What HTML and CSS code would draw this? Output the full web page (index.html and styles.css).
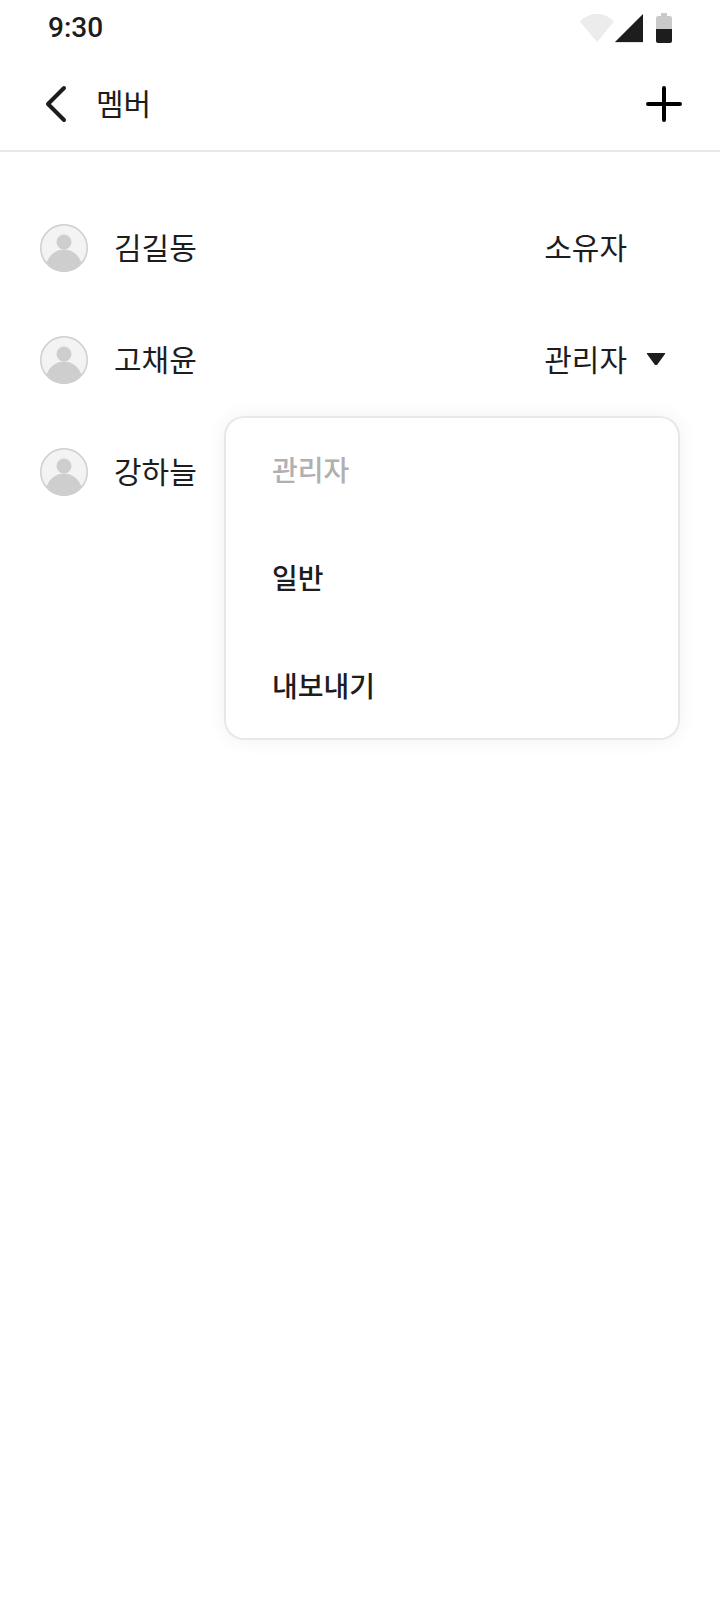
FILE: index.html
```html
<!DOCTYPE html>
<html lang="ko">
<head>
    <meta charset="UTF-8">
    <meta name="viewport" content="width=device-width, initial-scale=1.0">
    <title>멤버</title>
    <link rel="stylesheet" href="styles.css">
</head>
<body>
    <div class="status-bar">
        <span class="time">9:30</span>
        <div class="status-icons">
            <svg class="network" width="64" height="30" viewBox="0 0 64 30" aria-hidden="true">
                <path d="M0 8.6C4.5 3.6 10.5 1 17 1s12.500 2.600 17 7.600L17 29z" fill="#ececec"/>
                <path d="M35 29h28v1H35z" fill="#e0e0e0"/>
                <path d="M35 29L63 1v28H35z" fill="#1d1d1d"/>
            </svg>
            <svg class="battery" width="16" height="30" viewBox="0 0 16 30" aria-hidden="true">
                <path d="M5 0h6v3h3a2 2 0 0 1 2 2v11H0V5a2 2 0 0 1 2-2h3z" fill="#c9c9c9"/>
                <path d="M0 16h16v12a2 2 0 0 1-2 2H2a2 2 0 0 1-2-2z" fill="#1d1d1d"/>
            </svg>
        </div>
    </div>

    <header class="header">
        <button type="button" class="icon-button" aria-label="뒤로">
            <svg width="48" height="48" viewBox="0 0 48 48" fill="none" stroke="#1d1d1d" stroke-width="4" stroke-linecap="round" stroke-linejoin="round">
                <path d="M32 8L16 24l16 16"/>
            </svg>
        </button>
        <h1 class="title">멤버</h1>
        <button type="button" class="icon-button" aria-label="멤버 추가">
            <svg width="48" height="48" viewBox="0 0 48 48" fill="none" stroke="#000" stroke-width="4" stroke-linecap="round">
                <path d="M24 8v32M8 24h32"/>
            </svg>
        </button>
    </header>

    <main>
        <ul class="members">
            <li class="member">
                <svg class="avatar" viewBox="0 0 48 48" aria-hidden="true">
                    <circle cx="24" cy="24" r="23.250" fill="#f3f3f3" stroke="#cecece" stroke-width="1.500"/>
                    <circle cx="24" cy="18" r="7.500" fill="#cecece"/>
                    <path d="M6.500 39C9 31 16 25.500 24 25.500S39 31 41.500 39C37.500 44.500 31 48 24 48S10.500 44.500 6.500 39z" fill="#cecece"/>
                </svg>
                <span class="name">김길동</span>
                <span class="role owner">소유자</span>
            </li>
            <li class="member">
                <svg class="avatar" viewBox="0 0 48 48" aria-hidden="true">
                    <circle cx="24" cy="24" r="23.250" fill="#f3f3f3" stroke="#cecece" stroke-width="1.500"/>
                    <circle cx="24" cy="18" r="7.500" fill="#cecece"/>
                    <path d="M6.500 39C9 31 16 25.500 24 25.500S39 31 41.500 39C37.500 44.500 31 48 24 48S10.500 44.500 6.500 39z" fill="#cecece"/>
                </svg>
                <span class="name">고채윤</span>
                <button type="button" class="role" aria-haspopup="menu" aria-expanded="true" aria-controls="role-menu">
                    관리자
                    <svg width="48" height="48" viewBox="0 0 48 48" aria-hidden="true">
                        <path d="M15 17h18v1l-8 11h-2L15 18z" fill="#1d1d1d"/>
                    </svg>
                </button>
                <div class="menu" id="role-menu" role="menu">
                    <button type="button" class="menu-item" role="menuitem" disabled>관리자</button>
                    <button type="button" class="menu-item" role="menuitem">일반</button>
                    <button type="button" class="menu-item" role="menuitem">내보내기</button>
                </div>
            </li>
            <li class="member">
                <svg class="avatar" viewBox="0 0 48 48" aria-hidden="true">
                    <circle cx="24" cy="24" r="23.250" fill="#f3f3f3" stroke="#cecece" stroke-width="1.500"/>
                    <circle cx="24" cy="18" r="7.500" fill="#cecece"/>
                    <path d="M6.500 39C9 31 16 25.500 24 25.500S39 31 41.500 39C37.500 44.500 31 48 24 48S10.500 44.500 6.500 39z" fill="#cecece"/>
                </svg>
                <span class="name">강하늘</span>
            </li>
        </ul>
    </main>
</body>
</html>
```
FILE: styles.css
```css
* {
    box-sizing: border-box;
}

body {
    min-height: 100vh;
    margin: 0;
    background-color: #fff;
    color: #1d1d1d;
    font-family: "Noto Sans", "Noto Sans CJK KR", sans-serif;
    font-size: 30px;
    line-height: 44px;
}

button {
    padding: 0;
    border: none;
    background: none;
    color: inherit;
    font: inherit;
    cursor: pointer;
}

svg {
    display: block;
    flex-shrink: 0;
}

.status-bar {
    display: flex;
    align-items: center;
    justify-content: space-between;
    height: 56px;
    padding: 0 48px;
}

.time {
    font-family: Roboto, sans-serif;
    font-size: 28px;
    font-weight: 500;
    line-height: 32px;
}

.status-icons {
    display: flex;
    gap: 12px;
}

.header {
    display: flex;
    align-items: center;
    gap: 16px;
    height: 96px;
    padding: 2px 32px 0;
    border-bottom: 2px solid #e8e8e8;
}

.title {
    flex: 1;
    margin: 0;
    font-size: 30px;
    font-weight: 400;
}

.members {
    margin: 0;
    padding: 40px;
    list-style: none;
}

.member {
    position: relative;
    display: flex;
    align-items: center;
    gap: 26px;
    height: 112px;
}

.avatar {
    width: 48px;
    height: 48px;
}

.name {
    flex: 1;
}

.role {
    display: flex;
    align-items: center;
    gap: 5px;
}

.owner {
    padding-right: 53px;
}

.menu {
    position: absolute;
    top: 100%;
    right: 0;
    z-index: 1;
    width: 456px;
    max-width: 100%;
    border-radius: 20px;
    background-color: #fff;
    box-shadow: inset 0 0 0 2px #e8e8e8, 0 0 20px rgba(0, 0, 0, 0.06);
}

.menu-item {
    display: block;
    width: 100%;
    height: 108px;
    padding: 0 48px;
    font-size: 28px;
    font-weight: 500;
    text-align: left;
}

.menu-item:disabled {
    color: #b0b0b0;
    cursor: default;
}
```
